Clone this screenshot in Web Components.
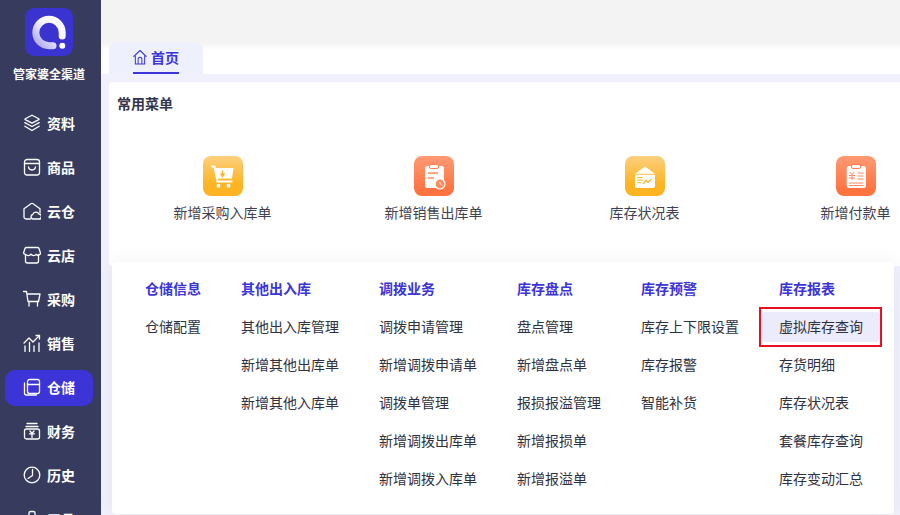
<!DOCTYPE html>
<html lang="zh">
<head>
<meta charset="utf-8">
<title>首页</title>
<style>
  html, body { margin: 0; height: 100%; overflow: hidden; }
  body { font-family: "Noto Sans CJK SC", "Liberation Sans", sans-serif; font-size: 14px; }
</style>
</head>
<body>
<app-shell>
  <side-bar slot="side"></side-bar>
  <top-tabs slot="top"></top-tabs>
  <quick-menu></quick-menu>
  <mega-menu slot="overlay"></mega-menu>
</app-shell>

<script>
const CJK = '"Noto Sans CJK SC", "Liberation Sans", sans-serif';

const NAV_ICONS = {
  资料: '<path d="M10 2.200l6.800 3.600a.5.5 0 0 1 0 .9L10 10.200 3.200 6.700a.5.5 0 0 1 0-.9z"/><path d="M2.800 9.600L10 13.500l7.200-3.900"/><path d="M2.800 13.200L10 17.500l7.200-4.300"/>',
  商品: '<rect x="2.500" y="2.500" width="15" height="15.500" rx="2.500"/><path d="M2.500 6.500h15"/><path d="M6.500 10c.5 4 6.500 4 7 0"/>',
  云仓: '<path d="M8.500 18H4a2 2 0 0 1-2-2V7.800L9.300 2.500a1.500 1.500 0 0 1 1.400 0L18 7.800V12"/><path d="M11 18a2.300 2.300 0 0 1-.3-4.500 3.400 3.400 0 0 1 6.300-.3A2.400 2.400 0 0 1 17 18z"/>',
  云店: '<path d="M3.500 9.500v6.500a2 2 0 0 0 2 2h9a2 2 0 0 0 2-2V9.500"/><path d="M4.500 2.500h11a1.500 1.500 0 0 1 1.500 1l1.500 4.500a2.400 2.400 0 0 1-4.300 1.300 3.200 3.200 0 0 1-5.200-.2 3.200 3.200 0 0 1-5.200.2A2.400 2.400 0 0 1 1.500 8L3 3.500a1.500 1.500 0 0 1 1.500-1z"/>',
  采购: '<path d="M1.500 2.500h3l1.500 10h10.500l1.500-7.500H4.800"/><path d="M7 12.500v4.500M15.500 12.500v4.500"/>',
  销售: '<path d="M2 10l5-5 4 4 6.500-6.500"/><path d="M14 2.500h3.500V6"/><path d="M3 13v5.500M7.500 9.500v9M12 13v5.500M17 10v8.500"/>',
  仓储: '<path d="M5.500 4.500a2 2 0 0 1 2-2h8a2 2 0 0 1 2 2v10a2 2 0 0 1-2 2h-8a2 2 0 0 1-2-2z"/><path d="M5.500 7.500h12"/><path d="M2.500 6v10a2 2 0 0 0 2 2h10"/>',
  财务: '<path d="M5 2.500h10M4 5.500h12"/><rect x="2.500" y="8" width="15" height="10" rx="2"/><path d="M8 10l2 2.200L12 10M7.500 12.800h5M10 12.300V16.500"/>',
  历史: '<circle cx="10" cy="10" r="7.800"/><path d="M10.500 4.500v6L6 13.500"/>',
  工具: '<rect x="2.500" y="7" width="15" height="10" rx="2"/><path d="M7 7V4a1.500 1.500 0 0 1 1.500-1.500h3A1.500 1.500 0 0 1 13 4v3"/>'
};

const NAV = ['资料', '商品', '云仓', '云店', '采购', '销售', '仓储', '财务', '历史', '工具'];

const SHORTCUTS = [
  { label: '新增采购入库单', tone: 'amber', icon: '<path d="M8.500 10.500h3l3 15h15" fill="none" stroke="#fff" stroke-width="2"/><path d="M12 12h18.500l-1.500 10.500H14.500z" fill="#fff"/><path d="M19.500 14.500v5M17.500 17.500l2 3 2-3" fill="none" stroke="#fcb62c" stroke-width="1.500"/><circle cx="15.500" cy="29.800" r="2" fill="#fff"/><circle cx="25.500" cy="29.800" r="2" fill="#fff"/>' },
  { label: '新增销售出库单', tone: 'coral', icon: '<rect x="11" y="10" width="19" height="22" rx="2.500" fill="#fff"/><rect x="15.500" y="8.500" width="9" height="4" rx="1.500" fill="#fff" stroke="#ff7d50" stroke-width="1"/><path d="M14 17h10M14 22h6" stroke="#ff8a5e" stroke-width="1.500"/><circle cx="26" cy="28" r="5" fill="#ff8a5e" stroke="#fff" stroke-width="1.200"/><path d="M25.500 26l1 2 1.500 1.500" stroke="#fff" stroke-width="1" fill="none"/>' },
  { label: '库存状况表', tone: 'amber', icon: '<path d="M20 10.500l10 7.300H10z" fill="#fff"/><path d="M10 18.800h20V30a2 2 0 0 1-2 2H12a2 2 0 0 1-2-2z" fill="#fff"/><path d="M12 21.700h6M12 24.200h6M12 26.700h4" stroke="#fcb62c" stroke-width="1"/><path d="M18 28l3-3.500 2 2 3.500-3.500" stroke="#fcb62c" stroke-width="1.200" fill="none"/>' },
  { label: '新增付款单', tone: 'coral', icon: '<rect x="10.700" y="10" width="19.300" height="22" rx="2.500" fill="#fff"/><rect x="15.500" y="8.500" width="9" height="4" rx="1.500" fill="#fff" stroke="#ff7d50" stroke-width="1"/><path d="M13.500 16l2.500 2.500L18.500 16M13 19.500h6M13 22h6M16 18.500v5.500M21.500 17h6M21.500 20h6M21.500 23h6M13 27h14.500M13 29.500h14.500" stroke="#ff8a5e" stroke-width="1" fill="none"/>' }
];

const COLUMNS = [
  { title: '仓储信息', items: ['仓储配置'] },
  { title: '其他出入库', items: ['其他出入库管理', '新增其他出库单', '新增其他入库单'] },
  { title: '调拨业务', items: ['调拨申请管理', '新增调拨申请单', '调拨单管理', '新增调拨出库单', '新增调拨入库单'] },
  { title: '库存盘点', items: ['盘点管理', '新增盘点单', '报损报溢管理', '新增报损单', '新增报溢单'] },
  { title: '库存预警', items: ['库存上下限设置', '库存报警', '智能补货'] },
  { title: '库存报表', items: ['虚拟库存查询', '存货明细', '库存状况表', '套餐库存查询', '库存变动汇总'], marked: '虚拟库存查询' }
];

class AppShell extends HTMLElement {
  constructor() {
    super();
    const root = this.attachShadow({ mode: 'open' });
    root.innerHTML = `
      <style>
        :host { display: flex; width: 900px; height: 515px; overflow: hidden; background: #f0f1fd; font-family: ${CJK}; }
        .main { flex: 1; min-width: 0; display: flex; flex-direction: column; position: relative; }
        .overlay { position: absolute; left: 11px; top: 262px; }
      </style>
      <slot name="side"></slot>
      <div class="main">
        <slot name="top"></slot>
        <slot></slot>
        <div class="overlay"><slot name="overlay"></slot></div>
      </div>`;
  }
}

class SideBar extends HTMLElement {
  constructor() {
    super();
    const root = this.attachShadow({ mode: 'open' });
    root.innerHTML = `
      <style>
        :host { display: flex; flex-direction: column; flex: 0 0 101px; height: 515px; overflow: hidden; background: #373c5f; color: #fff; position: relative; z-index: 2; }
        .logo { flex: none; width: 48px; height: 48px; margin: 8px 0 0 25px; display: block; }
        .brand { flex: none; margin: 9px 0 0 13px; height: 18px; line-height: 18px; font-size: 12px; font-weight: 700; white-space: nowrap; }
        nav { flex: none; margin: 23px 0 0 5px; display: flex; flex-direction: column; gap: 8px; }
      </style>
      <svg class="logo" viewBox="0 0 48 48">
        <defs>
          <linearGradient id="ring" x1="0" y1="1" x2="1" y2="0">
            <stop offset="0" stop-color="#a9a5ec"/><stop offset=".55" stop-color="#f4f3fd"/><stop offset="1" stop-color="#fff"/>
          </linearGradient>
        </defs>
        <rect width="48" height="48" rx="9" fill="#3a33d0"/>
        <path d="M37.200 28V24.500A13.200 13.200 0 1 0 24 37.700H28" fill="none" stroke="url(#ring)" stroke-width="7" stroke-linecap="round"/>
        <circle cx="37.300" cy="37.700" r="3" fill="#fff"/>
      </svg>
      <div class="brand">管家婆全渠道</div>
      <nav>${NAV.map(n => `<nav-item label="${n}"${n === '仓储' ? ' active' : ''}></nav-item>`).join('')}</nav>`;
  }
}

class NavItem extends HTMLElement {
  constructor() {
    super();
    const label = this.getAttribute('label');
    const root = this.attachShadow({ mode: 'open' });
    root.innerHTML = `
      <style>
        :host { display: flex; align-items: center; flex: none; width: 88px; height: 36px; box-sizing: border-box; padding: 0 0 2px 18px; gap: 6px; border-radius: 10px; font-size: 14px; font-weight: 700; color: #fff; }
        :host([active]) { background: #3c34d6; }
        svg { width: 18px; height: 18px; flex: none; fill: none; stroke: #fff; stroke-width: 1.300; stroke-linejoin: round; stroke-linecap: round; }
      </style>
      <svg viewBox="1 1 18 18">${NAV_ICONS[label]}</svg>
      <span>${label}</span>`;
  }
}

class TopTabs extends HTMLElement {
  constructor() {
    super();
    const root = this.attachShadow({ mode: 'open' });
    root.innerHTML = `
      <style>
        :host { display: block; flex: none; }
        .bar { height: 42px; background: #f3f3f4; }
        .strip { height: 32px; background: linear-gradient(180deg, #f3f3f4, #fff 8px); padding-left: 8px; }
        .tab { width: 94px; height: 32px; box-sizing: border-box; padding-left: 24px; background: #eef0fd; border-radius: 8px 8px 0 0; }
        .label { width: 46px; height: 32px; display: flex; align-items: center; gap: 4px; border-bottom: 2px solid #3c34d6; box-sizing: border-box; color: #3c34d6; font-size: 14px; font-weight: 700; white-space: nowrap; }
        svg { width: 14px; height: 15px; flex: none; fill: none; stroke: #3c34d6; stroke-width: 1.100; stroke-linejoin: round; }
      </style>
      <div class="bar"></div>
      <div class="strip">
        <div class="tab">
          <div class="label">
            <svg viewBox="0.500 1 15 14.500" preserveAspectRatio="none"><path d="M1 7.500L8 1.500l7 6"/><path d="M3 6.500V14.500h10V6.500"/><path d="M6 14.500V10a2 2 0 0 1 4 0v4.500"/></svg>
            <span>首页</span>
          </div>
        </div>
      </div>`;
  }
}

class QuickMenu extends HTMLElement {
  constructor() {
    super();
    const root = this.attachShadow({ mode: 'open' });
    root.innerHTML = `
      <style>
        :host { display: block; flex: none; margin: 8px 0 0 8px; height: 184px; box-sizing: border-box; background: #fff; border-radius: 4px 0 0 4px; padding: 11px 0 0 8px; overflow: hidden; }
        h2 { margin: 0; height: 20px; line-height: 20px; font-size: 14px; font-weight: 700; color: #33354a; }
        .row { display: flex; margin-top: 43px; }
      </style>
      <h2>常用菜单</h2>
      <div class="row">${SHORTCUTS.map((s, i) => `<short-cut index="${i}"></short-cut>`).join('')}</div>`;
  }
}

class ShortCut extends HTMLElement {
  constructor() {
    super();
    const s = SHORTCUTS[+this.getAttribute('index')];
    const bg = s.tone === 'amber'
      ? 'linear-gradient(180deg, #fdd07f, #fcb422 70%)'
      : 'linear-gradient(180deg, #ff9a74, #ff7340 85%)';
    const root = this.attachShadow({ mode: 'open' });
    root.innerHTML = `
      <style>
        :host { display: flex; flex-direction: column; align-items: center; flex: 0 0 211px; }
        svg { width: 40px; height: 40px; border-radius: 8px; background: ${bg}; display: block; }
        span { margin-top: 6px; height: 20px; line-height: 20px; font-size: 14px; color: #3f4150; white-space: nowrap; }
      </style>
      <svg viewBox="0 0 40 40">${s.icon}</svg>
      <span>${s.label}</span>`;
  }
}

class MegaMenu extends HTMLElement {
  constructor() {
    super();
    const root = this.attachShadow({ mode: 'open' });
    root.innerHTML = `
      <style>
        :host { display: flex; gap: 40px; width: 782px; height: 252px; box-sizing: border-box; padding: 7px 0 0 33px; background: #fff; border-radius: 4px; box-shadow: 0 0 20px rgba(0, 0, 0, .06); }
      </style>
      ${COLUMNS.map((c, i) => `<menu-column index="${i}"></menu-column>`).join('')}`;
  }
}

class MenuColumn extends HTMLElement {
  constructor() {
    super();
    const c = COLUMNS[+this.getAttribute('index')];
    const root = this.attachShadow({ mode: 'open' });
    root.innerHTML = `
      <style>
        :host { display: flex; flex-direction: column; flex: none; }
        h3 { margin: 0 0 5px; height: 38px; line-height: 38px; font-size: 14px; font-weight: 700; color: #3c34d6; }
        a { display: block; height: 30px; line-height: 28px; margin: 0 -17px 8px; padding: 0 17px; font-size: 14px; color: #2f3040; border-radius: 4px; white-space: nowrap; position: relative; }
        a.marked { background: #ebebfc; }
        a.marked::after { content: ""; position: absolute; inset: -5px -2px -5px -3px; border: 2px solid #e81123; }
      </style>
      <h3>${c.title}</h3>
      ${c.items.map(t => `<a class="${t === c.marked ? 'marked' : ''}">${t}</a>`).join('')}`;
  }
}

customElements.define('app-shell', AppShell);
customElements.define('side-bar', SideBar);
customElements.define('nav-item', NavItem);
customElements.define('top-tabs', TopTabs);
customElements.define('quick-menu', QuickMenu);
customElements.define('short-cut', ShortCut);
customElements.define('mega-menu', MegaMenu);
customElements.define('menu-column', MenuColumn);
</script>
</body>
</html>
